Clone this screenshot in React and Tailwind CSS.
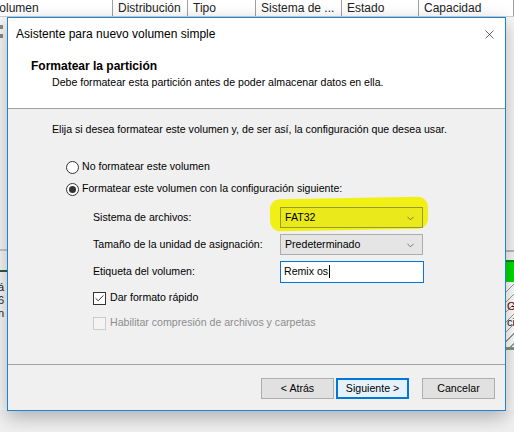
import { ChevronDown, X, Check } from 'lucide-react'

const font = { fontFamily: '"Liberation Sans", Arial, sans-serif' }

function Radio({ checked, label }) {
  return (
    <div className="flex items-center h-[22px] ml-[58px]">
      <span className="w-[13px] h-[13px] rounded-full border border-[#333] bg-white flex items-center justify-center">
        {checked && <span className="w-[7px] h-[7px] rounded-full bg-[#333]" />}
      </span>
      <span className="ml-[3px] text-[10.6px] text-[#000]">{label}</span>
    </div>
  )
}

function Combo({ value, highlight }) {
  return (
    <div
      className={`relative w-[143px] h-[21px] border flex items-center pl-[4px] text-[10.6px] ${
        highlight ? 'bg-[#e9e91c] border-[#9a9a28]' : 'bg-[#e5e5e5] border-[#adadad]'
      }`}
    >
      <span>{value}</span>
      <ChevronDown className="absolute right-[6px] top-[5px] w-[11px] h-[11px] text-[#444]" strokeWidth={1.5} />
    </div>
  )
}

function Btn({ label, primary }) {
  return (
    <div
      className={`w-[73px] h-[21px] flex items-center justify-center text-[10.6px] ${
        primary ? 'border-2 border-[#0078d7] bg-[#e5f1fb]' : 'border border-[#adadad] bg-[#e1e1e1]'
      }`}
    >
      {label}
    </div>
  )
}

export default function App() {
  const cols = [
    { w: 113, t: 'Volumen', cls: '-ml-[13px]' },
    { w: 75, t: 'Distribución' },
    { w: 68, t: 'Tipo' },
    { w: 86, t: 'Sistema de ...' },
    { w: 77, t: 'Estado' },
    { w: 95, t: 'Capacidad' },
  ]

  return (
    <div className="relative w-[514px] h-[432px] bg-[#f0f0f0] overflow-hidden text-black" style={font}>
      {/* background list header */}
      <div className="flex h-[17px] bg-white border-b border-[#d0d0d0]">
        {cols.map((c, i) => (
          <div
            key={i}
            className="h-full border-r border-[#a0a0a0] pl-[5px] text-[12px] leading-[17px] text-[#222] overflow-hidden whitespace-nowrap flex-shrink-0"
            style={{ width: c.w }}
          >
            <span className={c.cls}>{c.t}</span>
          </div>
        ))}
      </div>

      {/* left strip of background window */}
      <div className="absolute left-0 top-[17px] w-[7px] h-[393px] bg-[#f7f7f7] overflow-hidden">
        <div className="absolute left-0 top-[8px] w-[3px] h-[4px] bg-[#888]" />
        <div className="absolute left-0 top-[17px] w-[3px] h-[4px] bg-[#888]" />
        <div className="absolute left-0 top-[232px] w-[7px] h-[2px] bg-[#c8c8c8]" />
        <div className="absolute left-0 top-[253px] w-[7px] h-[2px] bg-[#2e5a3a]" />
        <div className="absolute left-[-2px] top-[264px] text-[11px] leading-[13px] text-[#222]">
          á<br />6<br />n
        </div>
      </div>

      {/* right strip of background window */}
      <div className="absolute left-[506px] top-[17px] w-[8px] h-[393px] bg-[#f7f7f7] overflow-hidden">
        <div className="absolute left-0 top-[233px] w-[8px] h-[2px] bg-[#b8b8b8]" />
        <div className="absolute left-0 top-[243px] w-[8px] h-[22px] bg-[#00dd00] border-t-2 border-[#0a8a0a]" />
        <div
          className="absolute left-0 top-[266px] w-[8px] h-[64px]"
          style={{ backgroundImage: 'repeating-linear-gradient(135deg, #fff 0 6px, #999 6px 7px)' }}
        />
        <div className="absolute left-[1px] top-[283px] text-[11px] leading-[13px] text-[#600]">G</div>
        <div className="absolute left-[1px] top-[299px] text-[11px] leading-[13px] text-[#222]">ci</div>
        <div className="absolute left-0 top-[330px] w-[8px] h-[3px] bg-[#7a9a7a]" />
      </div>

      {/* dialog window */}
      <div className="absolute left-[7px] top-[17px] w-[499px] h-[394px] border border-[#1883d7] bg-[#f0f0f0] shadow-[0_6px_18px_rgba(0,0,0,0.28)] flex flex-col">
        <div className="h-[32px] bg-white flex items-center justify-between pl-[8px] pr-[8px]">
          <span className="text-[12px]">Asistente para nuevo volumen simple</span>
          <X className="w-[15px] h-[15px] text-[#222]" strokeWidth={1.1} />
        </div>

        <div className="h-[59px] bg-white border-b border-[#a0a0a0] pl-[23px] pt-[9px]">
          <div className="text-[12px] font-bold leading-[14px]">Formatear la partición</div>
          <div className="ml-[21px] mt-[2px] text-[10.6px] leading-[14px]">
            Debe formatear esta partición antes de poder almacenar datos en ella.
          </div>
        </div>

        <div className="flex-1 flex flex-col">
          <div className="ml-[44px] mt-[13px] text-[10.6px] leading-[14px]">
            Elija si desea formatear este volumen y, de ser así, la configuración que desea usar.
          </div>

          <div className="mt-[20px]">
            <Radio label="No formatear este volumen" />
            <Radio checked label="Formatear este volumen con la configuración siguiente:" />
          </div>

          <div className="ml-[85px] mt-[7px] flex flex-col gap-[6px]">
            <div className="flex items-center h-[21px]">
              <span className="w-[187px] text-[10.6px]">Sistema de archivos:</span>
              <div className="relative">
                <div className="absolute -left-[10px] -top-[9px] w-[158px] h-[32px] bg-[#f0f014] rounded-[10px] rotate-[-1deg]" />
                <div className="relative">
                  <Combo value="FAT32" highlight />
                </div>
              </div>
            </div>
            <div className="flex items-center h-[21px]">
              <span className="w-[187px] text-[10.6px]">Tamaño de la unidad de asignación:</span>
              <Combo value="Predeterminado" />
            </div>
            <div className="flex items-center h-[21px]">
              <span className="w-[187px] text-[10.6px]">Etiqueta del volumen:</span>
              <div className="w-[144px] h-[22px] border border-[#0078d7] bg-white flex items-center pl-[3px] text-[10.6px]">
                Remix os<span className="w-px h-[13px] bg-black ml-[1px]" />
              </div>
            </div>

            <div className="flex items-center h-[14px] mt-[3px]">
              <span className="w-[13px] h-[13px] border border-[#333] bg-white flex items-center justify-center">
                <Check className="w-[11px] h-[11px] text-[#222]" strokeWidth={2} />
              </span>
              <span className="ml-[4px] text-[10.6px]">Dar formato rápido</span>
            </div>
            <div className="flex items-center h-[14px] mt-[5px]">
              <span className="w-[13px] h-[13px] border border-[#cccccc] bg-[#f4f4f4]" />
              <span className="ml-[4px] text-[10.6px] text-[#8d8d8d]">Habilitar compresión de archivos y carpetas</span>
            </div>
          </div>
        </div>

        <div className="h-[46px] border-t border-[#a0a0a0] flex items-start pt-[13px] pl-[253px]">
          <Btn label="< Atrás" />
          <div className="ml-[2px]">
            <Btn label="Siguiente >" primary />
          </div>
          <div className="ml-[13px]">
            <Btn label="Cancelar" />
          </div>
        </div>
      </div>
    </div>
  )
}
